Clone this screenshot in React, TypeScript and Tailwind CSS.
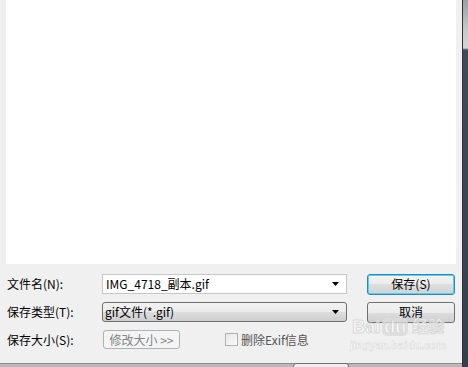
import React from 'react';

const font = { fontFamily: '"Noto Sans CJK SC", "DejaVu Sans", sans-serif' };

const Arrow = () => (
    <svg width="8" height="5" viewBox="0 0 8 5" className="shrink-0">
        <path d="M0 0h7l-3.5 4z" fill="#000" />
    </svg>
);

export default function App() {
    return (
        <div className="flex w-[468px] h-[367px] bg-[#f0f0f0] text-[12px] text-black overflow-hidden" style={font}>
            {/* dialog body */}
            <div className="relative flex flex-col w-[462px] h-full">
                <div className="ml-[6px] w-[450px] h-[264px] bg-white" />

                <div className="flex flex-col pt-[10px]">
                    {/* file name */}
                    <div className="flex items-center h-[20px]">
                        <div className="w-[102px] pl-[7px] leading-none">文件名(N):</div>
                        <div className="flex items-center justify-between w-[245px] h-[20px] bg-white border border-[#c5c7cc] pl-[3px] pr-[6px]">
                            <span className="leading-none">IMG_4718_副本.gif</span>
                            <Arrow />
                        </div>
                        <button className="ml-[20px] w-[88px] h-[21px] rounded-[3px] border border-[#3c7fb1] shadow-[inset_0_0_0_1px_#48d6fb] bg-[linear-gradient(#f4f4f4_0%,#ececec_50%,#dedede_50%,#d2d2d2_100%)] leading-none">
                            保存(S)
                        </button>
                    </div>

                    {/* file type */}
                    <div className="flex items-center h-[20px] mt-[8px]">
                        <div className="w-[102px] pl-[7px] leading-none">保存类型(T):</div>
                        <div className="flex items-center justify-between w-[245px] h-[20px] rounded-[3px] border border-[#707070] bg-[linear-gradient(#f2f2f2_0%,#ebebeb_50%,#dddddd_50%,#cfcfcf_100%)] pl-[2px] pr-[6px]">
                            <span className="leading-none">gif文件(*.gif)</span>
                            <Arrow />
                        </div>
                        <button className="ml-[20px] w-[88px] h-[21px] rounded-[3px] border border-[#707070] bg-[linear-gradient(#f2f2f2_0%,#ebebeb_50%,#dddddd_50%,#cfcfcf_100%)] leading-none">
                            取消
                        </button>
                    </div>

                    {/* size */}
                    <div className="flex items-center h-[19px] mt-[8px]">
                        <div className="w-[103px] pl-[7px] leading-none">保存大小(S):</div>
                        <div className="flex items-center justify-center w-[77px] h-[19px] rounded-[3px] border border-[#adb2b5] bg-[#f4f4f4] text-[#838383] leading-none">
                            修改大小 &gt;&gt;
                        </div>
                        <div className="flex items-center ml-[45px] gap-[3px] text-[#555555]">
                            <div className="w-[13px] h-[13px] border border-[#b1b1b1] bg-[linear-gradient(135deg,#e6e6e6,#fbfbfb)]" />
                            <span className="leading-none">删除Exif信息</span>
                        </div>
                    </div>
                </div>

                {/* bottom edge */}
                <div className="mt-auto flex h-[4px] border-t border-[#8e8e8e] bg-[#b9b9b9]">
                    <div className="ml-[293px] w-[56px] h-[6px] -mt-[1px] rounded-t-[3px] border border-[#707070] bg-[#eeeeee]" />
                </div>

                {/* watermark */}
                <div className="absolute left-[350px] top-[318px] flex flex-col items-center text-white pointer-events-none select-none opacity-80" style={{ fontFamily: '"Liberation Sans", "Noto Sans CJK SC", sans-serif' }}>
                    <div className="flex items-center gap-[2px] text-[18px] font-bold leading-none [-webkit-text-stroke:1px_#d4d4d4]">
                        <span>Bai</span>
                        <span className="px-[2px] rounded-[5px] bg-[#dcdcdc]">du</span>
                        <span className="ml-[2px] text-[16px]">经验</span>
                    </div>
                    <div className="mt-[4px] text-[11px] font-bold leading-none [-webkit-text-stroke:0.5px_#d4d4d4]">jingyan.baidu.com</div>
                </div>
            </div>

            {/* window border on the right */}
            <div className="flex w-[6px] h-full">
                <div className="w-[1px] h-full bg-[#2e3338]" />
                <div className="flex-1 h-full bg-[linear-gradient(#9aa0a6_0px,#c6c9cc_30px,#d2d4d6_48px,#414b57_50px,#36404c_100%)]" />
            </div>
        </div>
    );
}
